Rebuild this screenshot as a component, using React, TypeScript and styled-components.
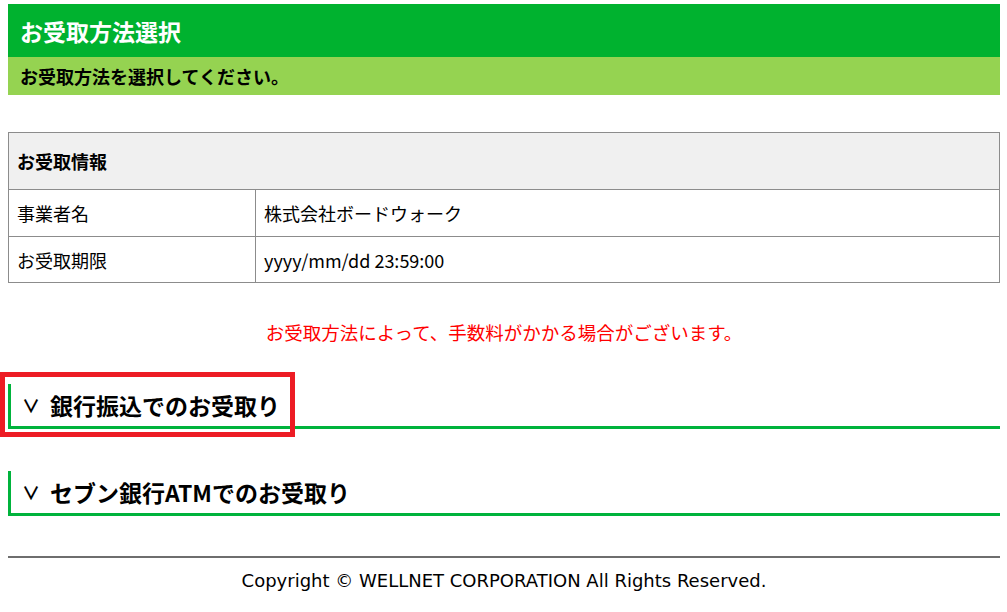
import styled, { createGlobalStyle } from "styled-components";

const GlobalStyle = createGlobalStyle`
  body {
    margin: 0;
    background: #fff;
    color: #000;
    font-family: "Noto Sans CJK JP", "Noto Sans", sans-serif;
    font-size: 18px;
  }
`;

const Page = styled.div`
  padding: 4px 7px 0 8px;
`;

const TitleBar = styled.h1`
  margin: 0;
  height: 53px;
  display: flex;
  align-items: center;
  padding-left: 12px;
  background: #00b22f;
  color: #fff;
  font-size: 23px;
  font-weight: 700;
`;

const SubBar = styled.p`
  margin: 0;
  height: 38px;
  display: flex;
  align-items: center;
  padding-left: 12px;
  background: #95d351;
  font-size: 18px;
  font-weight: 700;
`;

const InfoTable = styled.table`
  width: 100%;
  margin-top: 37px;
  border-collapse: collapse;
  border: 1px solid #8c8c8c;
`;

const Cell = styled.td<{ $head?: boolean; $height: number; $width?: string }>`
  height: ${({ $height }) => $height}px;
  width: ${({ $width }) => $width ?? "auto"};
  padding: 0 8px;
  border: 1px solid #8c8c8c;
  background: ${({ $head }) => ($head ? "#f0f0f0" : "#fff")};
  font-weight: ${({ $head }) => ($head ? 700 : 400)};
  font-size: 18px;
  text-align: left;
  box-sizing: border-box;
`;

const Notice = styled.p`
  margin: 37px 0 0;
  text-align: center;
  color: #ff0000;
  font-size: 18.5px;
  line-height: 24px;
`;

const Section = styled.section<{ $top: number }>`
  position: relative;
  margin-top: ${({ $top }) => $top}px;
`;

const SectionHead = styled.h2`
  margin: 0;
  height: 42px;
  display: flex;
  align-items: center;
  gap: 10px;
  padding-left: 11px;
  border-left: 3px solid #00b33c;
  border-bottom: 3px solid #00b33c;
  font-size: 23px;
  font-weight: 700;
`;

const Chevron = styled.span`
  font-size: 18px;
  font-weight: 700;
`;

const Highlight = styled.div`
  position: absolute;
  left: -8px;
  top: -12px;
  width: 295px;
  height: 65px;
  border: 5px solid #ed1c24;
  box-sizing: border-box;
  pointer-events: none;
`;

const Footer = styled.footer`
  margin-top: 40px;
  border-top: 2px solid #6e6e6e;
  padding-top: 10px;
  text-align: center;
  font-family: "DejaVu Sans", "Noto Sans CJK JP", sans-serif;
  font-size: 18px;
  line-height: 26px;
`;

export default function App() {
  return (
    <>
      <GlobalStyle />
      <Page>
        <TitleBar>お受取方法選択</TitleBar>
        <SubBar>お受取方法を選択してください。</SubBar>

        <InfoTable>
          <tbody>
            <tr>
              <Cell as="th" colSpan={2} $head $height={57}>
                お受取情報
              </Cell>
            </tr>
            <tr>
              <Cell $height={47} $width="247px">
                事業者名
              </Cell>
              <Cell $height={47}>株式会社ボードウォーク</Cell>
            </tr>
            <tr>
              <Cell $height={46} $width="247px">
                お受取期限
              </Cell>
              <Cell $height={46}>yyyy/mm/dd 23:59:00</Cell>
            </tr>
          </tbody>
        </InfoTable>

        <Notice>お受取方法によって、手数料がかかる場合がございます。</Notice>

        <Section $top={40}>
          <SectionHead>
            <Chevron>∨</Chevron>銀行振込でのお受取り
          </SectionHead>
          <Highlight />
        </Section>

        <Section $top={42}>
          <SectionHead>
            <Chevron>∨</Chevron>セブン銀行ATMでのお受取り
          </SectionHead>
        </Section>

        <Footer>Copyright © WELLNET CORPORATION All Rights Reserved.</Footer>
      </Page>
    </>
  );
}
